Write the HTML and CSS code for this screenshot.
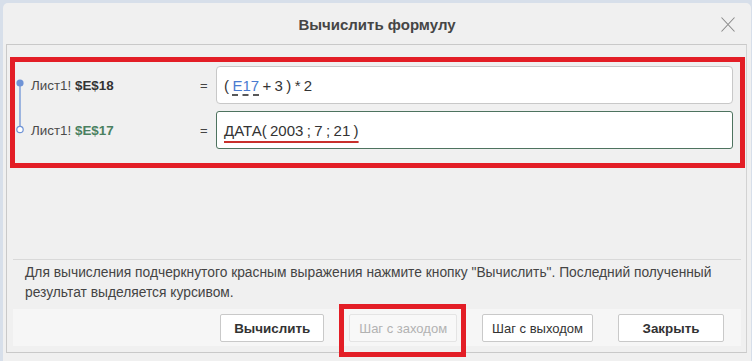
FILE: index.html
```html
<!DOCTYPE html>
<html lang="ru">
<head>
<meta charset="utf-8">
<title>Вычислить формулу</title>
<link rel="stylesheet" href="styles.css">
</head>
<body>
<div class="dialog">
  <div class="titlebar">
    <span></span>
    <span class="title">Вычислить формулу</span>
    <button class="close" aria-label="Закрыть">
      <svg width="14" height="15" viewBox="0 0 14 15"><path d="M0.5 0.5 L13.5 14.5 M13.5 0.5 L0.5 14.5" stroke="#8a8a8a" stroke-width="1.1" fill="none"/></svg>
    </button>
  </div>
  <div class="panel">
    <div class="steps">
      <svg class="timeline" width="16" height="83" viewBox="0 0 16 83">
        <line x1="5" y1="17" x2="5" y2="60" stroke="#6f93d6" stroke-width="1.3"/>
        <circle cx="5" cy="17" r="3.6" fill="#6f93d6"/>
        <circle cx="5" cy="63.5" r="3.2" fill="#fff" stroke="#6f93d6" stroke-width="1.2"/>
      </svg>
      <div class="rows">
        <div class="row">
          <div class="ref">Лист1! <b>$E$18</b></div>
          <div class="eq">=</div>
          <div class="expr">( <span class="cellref">E17</span> + 3 ) * 2</div>
        </div>
        <div class="row">
          <div class="ref">Лист1! <b class="green">$E$17</b></div>
          <div class="eq">=</div>
          <div class="expr active"><span class="underlined">ДАТА( 2003 ; 7 ; 21 )</span></div>
        </div>
      </div>
    </div>
    <div class="info">
      <p class="hint">Для вычисления подчеркнутого красным выражения нажмите кнопку "Вычислить". Последний полученный результат выделяется курсивом.</p>
      <div class="actions">
        <button class="btn bold">Вычислить</button>
        <button class="btn disabled highlight" disabled>Шаг с заходом</button>
        <button class="btn">Шаг с выходом</button>
        <button class="btn bold wide">Закрыть</button>
      </div>
    </div>
  </div>
</div>
</body>
</html>
```
FILE: styles.css
```css
* { box-sizing: border-box; }
html, body { margin: 0; padding: 0; }
body {
  width: 752px;
  height: 361px;
  overflow: hidden;
  background: #d7dfea;
  font-family: "Liberation Sans", Arial, sans-serif;
  color: #444;
}
.dialog {
  margin: 3px 1px 0 3px;
  height: 358px;
  background: #f0f0f0;
  border-radius: 5px 5px 0 0;
  display: flex;
  flex-direction: column;
}
.titlebar {
  height: 41px;
  display: grid;
  grid-template-columns: 1fr auto 1fr;
  align-items: center;
}
.title {
  font-size: 15px;
  font-weight: bold;
  color: #454545;
  padding-top: 1px;
}
.close {
  justify-self: end;
  margin-right: 16px;
  margin-top: 2px;
  padding: 0;
  border: 0;
  background: none;
  width: 14px;
  height: 15px;
  display: flex;
}
.panel {
  margin: 0 4px 0 3px;
  height: 309px;
  border: 1px solid #c9c9c9;
  border-right-color: #d2d2d2;
  display: flex;
  flex-direction: column;
}
.steps {
  margin: 12px 1px 0 3px;
  border: 5px solid #e31e26;
  padding: 4px 7px 14px 0;
  display: flex;
}
.timeline {
  flex: 0 0 16px;
  display: block;
}
.rows {
  flex: 1;
  display: flex;
  flex-direction: column;
  gap: 7px;
}
.row {
  display: flex;
  align-items: center;
  height: 38px;
}
.ref {
  width: 168px;
  font-size: 13.4px;
  color: #4a4a4a;
}
.ref b { color: #333; }
.ref b.green { color: #4a8060; }
.eq {
  width: 17px;
  padding-left: 1px;
  font-size: 13px;
  color: #444;
}
.expr {
  flex: 1;
  height: 38px;
  background: #fff;
  border: 1px solid #c8c8c8;
  border-radius: 4px;
  padding: 0 0 0 7px;
  display: flex;
  align-items: center;
  font-size: 15px;
  color: #333;
  white-space: pre;
  word-spacing: -0.8px;
}
.expr.active {
  border-color: #4e735f;
  border-radius: 3px;
}
.cellref {
  color: #4a7bd0;
  text-decoration: underline dashed #222;
  text-underline-offset: 4px;
}
.underlined {
  text-decoration: underline solid #c8302c;
  text-decoration-thickness: 1.5px;
  text-underline-offset: 5px;
}
.info {
  margin: 91px 5px 0 6px;
  border-top: 1px solid #d9d9d9;
}
.hint {
  margin: 0;
  padding: 3px 0 0 12px;
  font-size: 13.8px;
  line-height: 20px;
  color: #444;
}
.actions {
  margin-top: 6px;
  background: #f6f6f6;
  padding: 5px 17px 4px;
  display: flex;
  justify-content: flex-end;
  gap: 25px;
}
.btn {
  height: 28px;
  min-width: 104px;
  padding: 0 9px;
  background: #fff;
  border: 1px solid #c9c9c9;
  border-radius: 2px;
  font-family: "Liberation Sans", Arial, sans-serif;
  font-size: 13px;
  color: #333;
}
.btn.wide { min-width: 106px; }
.btn.bold { font-weight: bold; font-size: 13.4px; }
.btn.disabled {
  background: #f8f8f8;
  border-color: #e4e4e4;
  color: #b2b2b2;
}
.highlight { position: relative; }
.highlight::after {
  content: "";
  position: absolute;
  top: -11px;
  left: -11px;
  right: -10px;
  bottom: -16px;
  border: 5px solid #e31e26;
}
```
